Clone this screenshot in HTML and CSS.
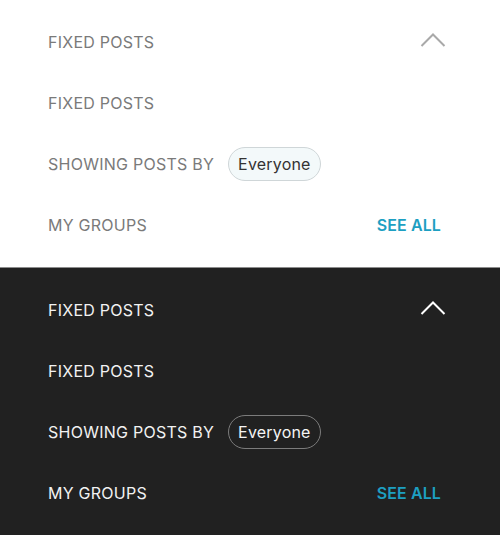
FILE: index.html
```html
<!DOCTYPE html>
<html lang="en">
<head>
    <meta charset="UTF-8">
    <meta name="viewport" content="width=device-width, initial-scale=1.0">
    <title>Group Filters</title>
    <link rel="stylesheet" href="styles.css">
</head>
<body>
    <!-- Light theme -->
    <div class="panel light">
        <div class="row">
            <span class="label">FIXED POSTS</span>
            <svg class="chevron" width="26" height="14" viewBox="0 0 26 14">
                <polyline points="1.5,13 13,1.5 24.5,13" fill="none" stroke-width="2"/>
            </svg>
        </div>
        <div class="row">
            <span class="label">FIXED POSTS</span>
        </div>
        <div class="row">
            <span class="label">SHOWING POSTS BY</span>
            <span class="chip">Everyone</span>
        </div>
        <div class="row">
            <span class="label">MY GROUPS</span>
            <a href="#" class="see-all">SEE ALL</a>
        </div>
    </div>

    <!-- Dark theme -->
    <div class="panel dark">
        <div class="row">
            <span class="label">FIXED POSTS</span>
            <svg class="chevron" width="26" height="14" viewBox="0 0 26 14">
                <polyline points="1.5,13 13,1.5 24.5,13" fill="none" stroke-width="2"/>
            </svg>
        </div>
        <div class="row">
            <span class="label">FIXED POSTS</span>
        </div>
        <div class="row">
            <span class="label">SHOWING POSTS BY</span>
            <span class="chip">Everyone</span>
        </div>
        <div class="row">
            <span class="label">MY GROUPS</span>
            <a href="#" class="see-all">SEE ALL</a>
        </div>
    </div>
</body>
</html>
```

FILE: styles.css
```css
body {
    font-family: Inter, "Noto Sans", sans-serif;
    margin: 0;
    padding: 0;
}
.panel {
    padding: 11px 54px 12px 48px;
}
.light {
    background-color: #ffffff;
    color: #7a7a7a;
}
.dark {
    background-color: #212121;
    color: #f2f2f2;
    border-top: 1px solid #8c8c8c;
}
.row {
    display: flex;
    align-items: center;
    height: 61px;
}
.label {
    font-size: 16px;
    letter-spacing: 0.25px;
}
.chevron {
    margin-left: auto;
    margin-bottom: 4px;
}
.light .chevron polyline {
    stroke: #a9a9a9;
}
.dark .chevron polyline {
    stroke: #ffffff;
}
.chip {
    margin-left: 14px;
    height: 34px;
    box-sizing: border-box;
    padding: 0 9px;
    display: flex;
    align-items: center;
    border-radius: 17px;
    font-size: 16px;
    letter-spacing: 0.2px;
}
.light .chip {
    background-color: #f3f9fa;
    border: 1px solid #cfd6d8;
    color: #333333;
}
.dark .chip {
    border: 1px solid #7c7c7c;
    color: #f5f5f5;
}
.see-all {
    margin-left: auto;
    margin-right: 5px;
    color: #1d9fc2;
    text-decoration: none;
    font-size: 16px;
    font-weight: 600;
    letter-spacing: 0.1px;
}
```
